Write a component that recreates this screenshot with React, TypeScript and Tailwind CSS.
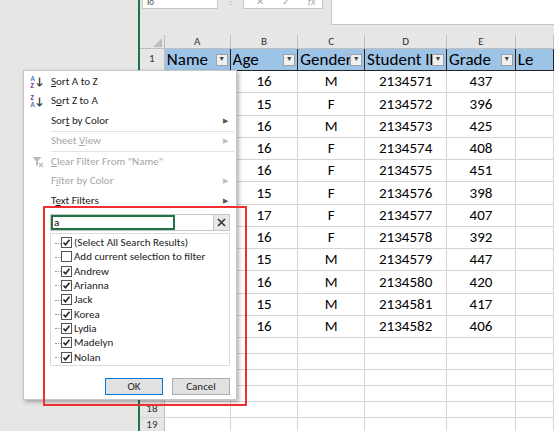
import React from "react";

const rows = [
  ["16","M","2134571","437"],["15","F","2134572","396"],["16","M","2134573","425"],["16","F","2134574","408"],
  ["16","F","2134575","451"],["15","F","2134576","398"],["17","F","2134577","407"],["16","F","2134578","392"],
  ["15","M","2134579","447"],["16","M","2134580","420"],["15","M","2134581","417"],["16","M","2134582","406"],
];
const cols = ["w-[69px]","w-[71px]","w-[70px]","w-[86px]","w-[72px]","w-[40px]"];

function Drop() {
  return <span className="w-[12px] h-[12px] shrink-0 border border-[#a0a0a0] bg-[#f0f0f0] flex items-center justify-center text-[7px] text-[#444]">▼</span>;
}
function Check({ on }: { on: boolean }) {
  return (
    <span className="w-[11px] h-[11px] border border-[#555] bg-white flex items-center justify-center">
      {on && <svg width="9" height="9" viewBox="0 0 9 9"><path d="M1.5 4.5 L3.5 6.8 L7.5 1.8" stroke="#222" strokeWidth="1.6" fill="none"/></svg>}
    </span>
  );
}

export default function App() {
  const menuItem = (label: React.ReactNode, opts: { dis?: boolean; arrow?: boolean; icon?: React.ReactNode } = {}) => (
    <div className={`relative h-[19.5px] shrink-0 flex items-center ${opts.dis ? "text-[#a6a6a6]" : "text-[#222]"}`}>
      <div className="w-[27px] flex justify-center">{opts.icon}</div>
      <span className="text-[11px]">{label}</span>
      {opts.arrow && <span className={`absolute right-[8px] text-[7px] ${opts.dis ? "text-[#bbb]" : "text-[#555]"}`}>▶</span>}
    </div>
  );
  return (
    <div className="relative w-[554px] h-[431px] overflow-hidden bg-[#e6e6e6] flex" style={{ fontFamily: "Calibri, Carlito, 'Liberation Sans', sans-serif" }}>
      <div className="w-[140px] shrink-0 bg-[#e6e6e6] border-r-2 border-[#217346]" />
      <div className="flex-1 flex flex-col overflow-hidden">
        <div className="h-[35px] shrink-0 flex items-start gap-[8px] bg-[#e6e6e6] pl-[2px]">
          <div className="w-[76px] h-[9px] bg-white border border-[#c6c6c6] border-t-0 text-[9px] leading-[4px] pl-1 text-[#444] overflow-hidden">I0</div>
          <div className="text-[#999] text-[9px] leading-[4px]">⋮</div>
          <div className="w-[80px] h-[9px] bg-white border border-[#c6c6c6] border-t-0 flex gap-[18px] text-[10px] leading-[4px] pl-3 text-[#aaa] overflow-hidden"><span>✕</span><span>✓</span><span className="italic">fx</span></div>
          <div className="flex-1 h-[25px] bg-white border-l border-b border-[#c6c6c6]" />
        </div>
        <div className="flex-1 bg-white flex flex-col">
          <div className="flex h-[14px] shrink-0 bg-[#e6e6e6] border-b border-[#bfbfbf] text-[11px] text-[#333]">
            <div className="w-[26px] border-r border-[#bfbfbf] relative"><svg className="absolute right-[2px] bottom-[1px]" width="9" height="9"><path d="M9 0 L9 9 L0 9 Z" fill="#bdbdbd"/></svg></div>
            {["A","B","C","D","E",""].map((c, i) => <div key={i} className={`${cols[i]} border-r border-[#bfbfbf] flex items-center justify-center leading-none`}>{c}</div>)}
          </div>
          <div className="flex h-[22px] shrink-0 border-b border-[#222]">
            <div className="w-[26px] bg-[#e6e6e6] border-r border-[#bfbfbf] text-[11px] text-[#333] flex items-center justify-center">1</div>
            {["Name","Age","Gender","Student ID","Grade","Le"].map((h, i) => (
              <div key={i} className={`${cols[i]} bg-[#9dc3e6] border-r border-[#222] flex items-center justify-between px-[2px] text-[17px] text-black overflow-hidden whitespace-nowrap`}>
                <span className="overflow-hidden">{h}</span>{i < 5 && <Drop />}
              </div>
            ))}
          </div>
          {rows.map((r, ri) => (
            <div key={ri} className="flex h-[22.25px] shrink-0 border-b border-[#d4d4d4]">
              <div className="w-[26px] bg-[#e6e6e6] border-r border-[#bfbfbf]" />
              {["", ...r, ""].map((v, i) => <div key={i} className={`${cols[i]} border-r border-[#d4d4d4] flex items-center justify-center text-[15px] text-black`}>{v}</div>)}
            </div>
          ))}
          {[14,15,16,17,18,19].map((n) => (
            <div key={n} className="flex h-[16px] shrink-0 border-b border-[#d4d4d4]">
              <div className="w-[26px] bg-[#e6e6e6] border-r border-[#bfbfbf] text-[11px] text-[#333] flex items-center justify-center">{n}</div>
              {cols.map((c, i) => <div key={i} className={`${c} border-r border-[#d4d4d4]`} />)}
            </div>
          ))}
        </div>
      </div>

      <div className="absolute left-[23px] top-[70px] w-[214px] h-[330px] bg-white border border-[#c6c6c6] shadow-[2px_2px_4px_rgba(0,0,0,0.3)] flex flex-col pt-[1px]">
        {menuItem(<><u>S</u>ort A to Z</>, { icon: <span className="text-[7px] leading-[7px] font-bold flex items-center"><span className="flex flex-col text-[#4472c4]"><span>A</span><span className="text-[#7030a0]">Z</span></span><span className="text-[11px] text-[#333]">↓</span></span> })}
        {menuItem(<>S<u>o</u>rt Z to A</>, { icon: <span className="text-[7px] leading-[7px] font-bold flex items-center"><span className="flex flex-col text-[#7030a0]"><span>Z</span><span className="text-[#4472c4]">A</span></span><span className="text-[11px] text-[#333]">↓</span></span> })}
        {menuItem(<>Sor<u>t</u> by Color</>, { arrow: true })}
        <div className="h-px shrink-0 bg-[#e3e3e3] ml-[27px] mr-[2px]" />
        {menuItem(<>Sheet <u>V</u>iew</>, { dis: true, arrow: true })}
        <div className="h-px shrink-0 bg-[#e3e3e3] ml-[27px] mr-[2px]" />
        {menuItem(<><u>C</u>lear Filter From "Name"</>, { dis: true, icon: <svg width="12" height="12" viewBox="0 0 12 12"><path d="M0.5 1 H9.5 L6 5 V9 L4 10 V5 Z" fill="#bbb"/><path d="M7 7 L11 11 M11 7 L7 11" stroke="#bbb" strokeWidth="1.2"/></svg> })}
        {menuItem(<>F<u>i</u>lter by Color</>, { dis: true, arrow: true })}
        {menuItem(<>T<u>e</u>xt Filters</>, { arrow: true })}
        <div className="ml-[26px] mr-[6px] mt-[3px] h-[17px] shrink-0 flex border border-[#c6c6c6]">
          <div className="w-[124px] border-2 border-[#217346] text-[11px] leading-[12px] pl-[1px]">a</div>
          <div className="flex-1" />
          <div className="w-[16px] bg-[#e8e8e8] border-l border-[#c6c6c6] flex items-center justify-center"><svg width="9" height="9"><path d="M1 1 L8 8 M8 1 L1 8" stroke="#333" strokeWidth="1.6"/></svg></div>
        </div>
        <div className="ml-[26px] mr-[6px] mt-[2px] h-[133px] shrink-0 border border-[#dcdcdc] pt-[2px] pl-[10px] flex flex-col">
          {[["(Select All Search Results)",true],["Add current selection to filter",false],["Andrew",true],["Arianna",true],["Jack",true],["Korea",true],["Lydia",true],["Madelyn",true],["Nolan",true]].map(([l, on], i) => (
            <div key={i} className="h-[14.3px] shrink-0 flex items-center gap-[2px] relative">
              <span className="absolute left-[-6px] top-[7px] w-[6px] border-t border-dotted border-[#999]" />
              <Check on={on as boolean} />
              <span className="text-[11px] text-[#222] leading-none">{l as string}</span>
            </div>
          ))}
        </div>
        <div className="flex justify-end gap-[9px] mr-[6px] mt-[12px]">
          <button className="w-[58px] h-[17px] bg-[#e1e1e1] border border-[#0078d7] text-[11px] text-[#222]">OK</button>
          <button className="w-[58px] h-[17px] bg-[#e1e1e1] border border-[#adadad] text-[11px] text-[#222]">Cancel</button>
        </div>
      </div>
      <div className="absolute left-[43px] top-[206px] w-[204px] h-[200px] border-2 border-[#f03030]" />
    </div>
  );
}
